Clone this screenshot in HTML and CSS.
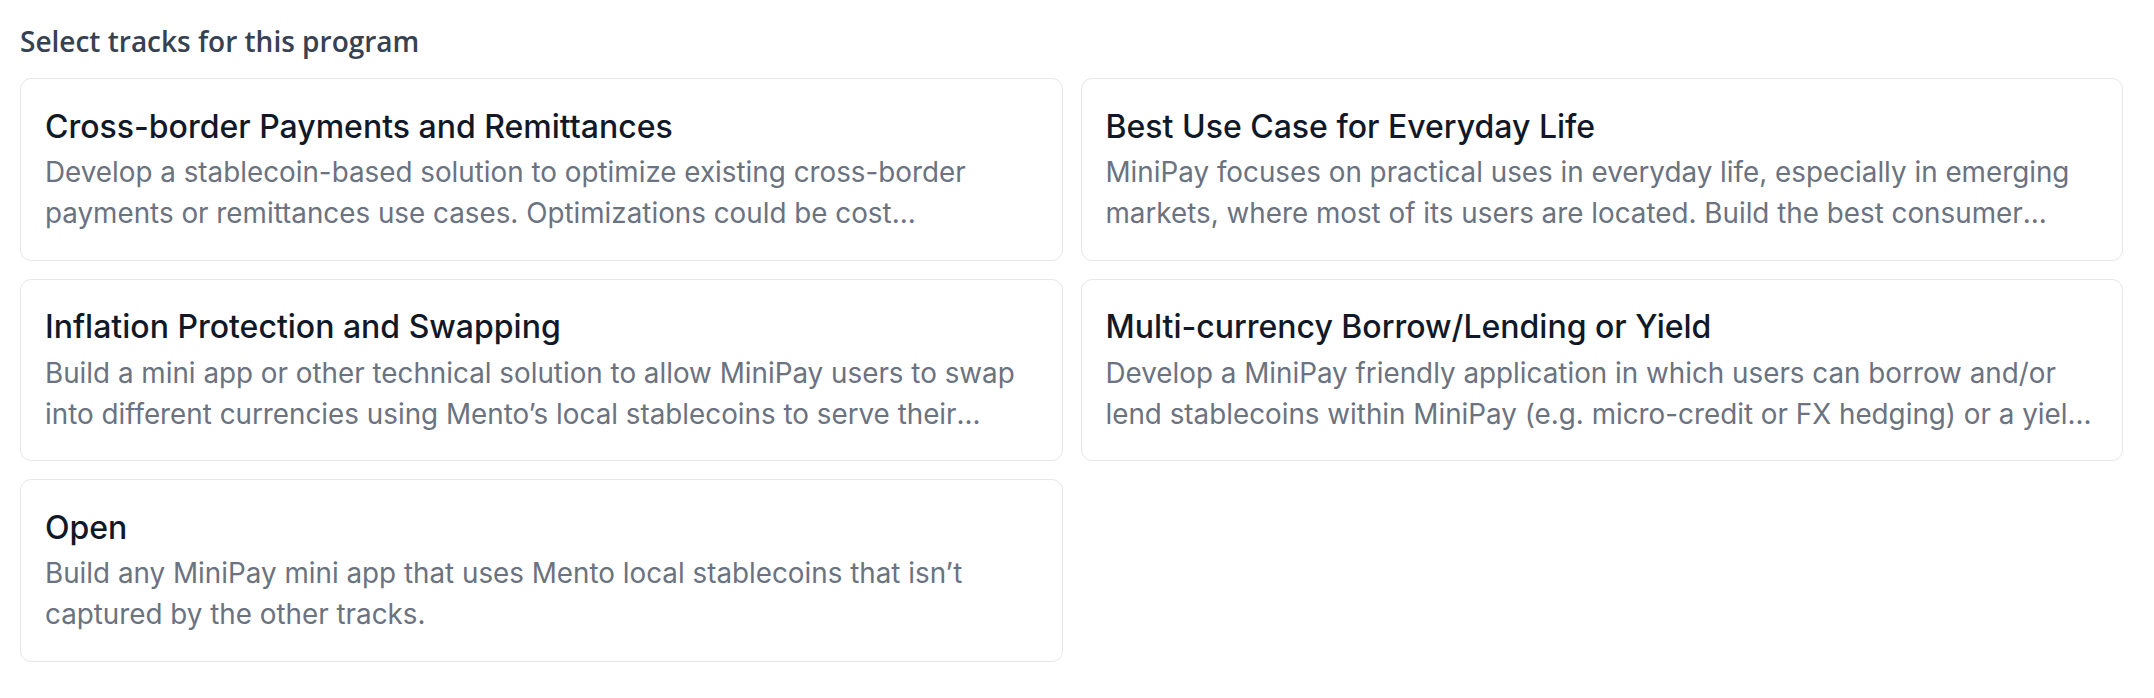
FILE: index.html
```html
<!DOCTYPE html>
<html lang="en">
<head>
<meta charset="utf-8">
<title>Select tracks</title>
<link rel="stylesheet" href="styles.css">
</head>
<body>
<main class="page">
  <h2 class="heading">Select tracks for this program</h2>
  <div class="tracks">
    <div class="card">
      <h3 class="card-title">Cross-border Payments and Remittances</h3>
      <p class="card-desc">Develop a stablecoin-based solution to optimize existing cross-border payments or remittances use cases. Optimizations could be cost reductions, faster settlement, better user experience or new corridors that are currently underserved.</p>
    </div>
    <div class="card">
      <h3 class="card-title">Best Use Case for Everyday Life</h3>
      <p class="card-desc">MiniPay focuses on practical uses in everyday life, especially in emerging markets, where most of its users are located. Build the best consumer application that solves real everyday problems for MiniPay users.</p>
    </div>
    <div class="card">
      <h3 class="card-title">Inflation Protection and Swapping</h3>
      <p class="card-desc">Build a mini app or other technical solution to allow MiniPay users to swap into different currencies using Mento’s local stablecoins to serve their needs, such as protecting savings against inflation.</p>
    </div>
    <div class="card">
      <h3 class="card-title">Multi-currency Borrow/Lending or Yield</h3>
      <p class="card-desc">Develop a MiniPay friendly application in which users can borrow and/or lend stablecoins within MiniPay (e.g. micro-credit or FX hedging) or a yield product for local stablecoins.</p>
    </div>
    <div class="card">
      <h3 class="card-title">Open</h3>
      <p class="card-desc">Build any MiniPay mini app that uses Mento local stablecoins that isn’t captured by the other tracks.</p>
    </div>
  </div>
</main>
</body>
</html>
```

FILE: styles.css
```css
* { box-sizing: border-box; }

html, body {
  margin: 0;
  padding: 0;
  background: #ffffff;
}

.page {
  padding: 22px 31px 0 20px;
}

.heading {
  margin: 0 0 18px 0;
  font-family: "Open Sans", "Noto Sans", sans-serif;
  font-weight: 600;
  font-size: 28px;
  line-height: 38px;
  color: #374151;
}

.tracks {
  display: grid;
  grid-template-columns: 1fr 1fr;
  gap: 18px;
}

.card {
  display: flex;
  flex-direction: column;
  gap: 5.5px;
  border: 1px solid #e5e7eb;
  border-radius: 11px;
  padding: 27.5px 24px 25px 24px;
  background: #ffffff;
}

.card-title {
  margin: 0;
  font-family: Inter, "Liberation Sans", sans-serif;
  font-weight: 500;
  font-size: 32px;
  line-height: 40px;
  color: #111827;
}

.card-desc {
  margin: 0;
  font-family: Inter, "Liberation Sans", sans-serif;
  font-weight: 400;
  font-size: 27.8px;
  line-height: 41.25px;
  color: #6b7280;
  display: -webkit-box;
  -webkit-line-clamp: 2;
  -webkit-box-orient: vertical;
  overflow: hidden;
}
```
